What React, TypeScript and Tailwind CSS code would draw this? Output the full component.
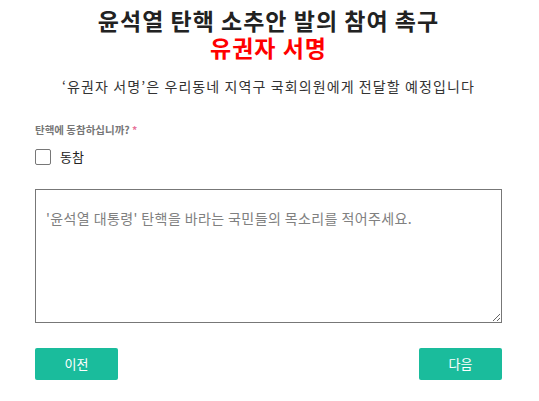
export default function App() {
  return (
    <div
      className="min-h-screen bg-white pl-[35px] pt-[7px] text-[#222]"
      style={{ fontFamily: '"Noto Sans CJK KR", "Noto Sans", sans-serif' }}
    >
      <div className="w-[467px]">
        <h1 className="text-center text-[23px] font-bold leading-[27px] tracking-[1px]">
          윤석열 탄핵 소추안 발의 참여 촉구
          <br />
          <span className="text-[#ff0000]">유권자 서명</span>
        </h1>

        <p className="mt-[15px] text-center text-[14px] leading-[20px] tracking-[1.1px] text-[#333]">
          ‘유권자 서명’은 우리동네 지역구 국회의원에게 전달할 예정입니다
        </p>

        <div className="mt-[26px] text-[10.5px] font-bold leading-[16px] text-[#777]">
          탄핵에 동참하십니까? <span className="text-[#e8739a]">*</span>
        </div>

        <label className="mt-[11px] flex items-center gap-[9px]">
          <span className="h-[16px] w-[16px] rounded-[2px] border border-[#777] bg-white" />
          <span className="text-[13px] leading-[16px] text-[#222]">동참</span>
        </label>

        <textarea
          className="mt-[24px] block h-[134px] w-full resize-y border border-[#777] px-[10px] pt-[19px] text-[14px] leading-[18px] tracking-[0.4px] text-[#333] outline-none placeholder:text-[#808080]"
          placeholder="'윤석열 대통령' 탄핵을 바라는 국민들의 목소리를 적어주세요."
        />

        <div className="mt-[25px] flex justify-between">
          <button className="h-[32px] w-[83px] rounded-[2px] bg-[#1abc9c] text-[13px] text-white">
            이전
          </button>
          <button className="h-[32px] w-[83px] rounded-[2px] bg-[#1abc9c] text-[13px] text-white">
            다음
          </button>
        </div>
      </div>
    </div>
  );
}
